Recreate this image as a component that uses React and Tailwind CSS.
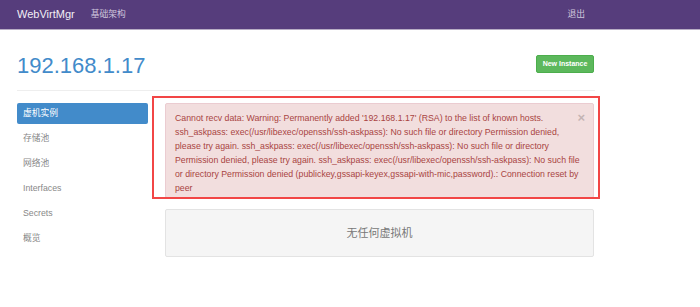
export default function App() {
  const items = ["存储池", "网络池", "Interfaces", "Secrets", "概览"];
  return (
    <div className="w-[700px] h-[307px] bg-white overflow-hidden font-['Liberation_Sans','Noto_Sans_CJK_SC',sans-serif]">
      <nav className="h-[30px] bg-[#563d7c] border-b border-[#b7adc4] flex items-center px-[17px]">
        <span className="text-[11px] text-[#f2eff6]">WebVirtMgr</span>
        <span className="ml-[16px] text-[8.75px] text-[#cfc6dc]">基础架构</span>
        <span className="ml-auto mr-[98px] text-[8.75px] text-[#cfc6dc]">退出</span>
      </nav>

      <div className="ml-[17px] w-[578px] pt-[25px]">
        <div className="flex justify-between items-start h-[22px]">
          <h1 className="text-[22px] leading-[22px] text-[#428bca]">192.168.1.17</h1>
          <button className="mr-[1px] h-[18px] w-[58px] rounded-[2px] bg-[#5cb85c] border border-[#4cae4c] text-white text-[7px] font-bold flex items-center justify-center">
            New Instance
          </button>
        </div>

        <div className="mt-[13px] border-t border-[#eeeeee]" />

        <div className="mt-[12px] flex gap-[17px]">
          <div className="w-[131px] flex flex-col gap-[4px]">
            <div className="h-[21px] px-[6px] flex items-center rounded-[2px] bg-[#428bca] text-white text-[8.75px]">
              虚机实例
            </div>
            {items.map((t) => (
              <div key={t} className="h-[21px] px-[6px] flex items-center text-[8.75px] text-[#888888]">
                {t}
              </div>
            ))}
          </div>

          <div className="w-[429px]">
            <div className="relative">
              <div className="rounded-[2px] bg-[#f2dede] border border-[#ebccd1] text-[#a94442] text-[8.75px] leading-[14px] pl-[9px] pr-[13px] pt-[7px] pb-[2px]">
                Cannot recv data: Warning: Permanently added '192.168.1.17' (RSA) to the list of known hosts. ssh_askpass: exec(/usr/libexec/openssh/ssh-askpass): No such file or directory Permission denied, please try again. ssh_askpass: exec(/usr/libexec/openssh/ssh-askpass): No such file or directory Permission denied, please try again. ssh_askpass: exec(/usr/libexec/openssh/ssh-askpass): No such file or directory Permission denied (publickey,gssapi-keyex,gssapi-with-mic,password).: Connection reset by peer
              </div>
              <span className="absolute right-[9px] top-[9px] text-[13px] leading-[12px] font-bold text-[#c4b4b4]">×</span>
              <div className="absolute -left-[13px] -top-[7px] -right-[6px] -bottom-[1px] border-2 border-[#f24646] pointer-events-none" />
            </div>

            <div className="mt-[11px] h-[48px] bg-[#f5f5f5] border border-[#e3e3e3] rounded-[2px] flex items-center justify-center text-[11px] text-[#777777] font-['Liberation_Serif','Noto_Sans_CJK_SC',serif]">
              无任何虚拟机
            </div>
          </div>
        </div>
      </div>
    </div>
  );
}
